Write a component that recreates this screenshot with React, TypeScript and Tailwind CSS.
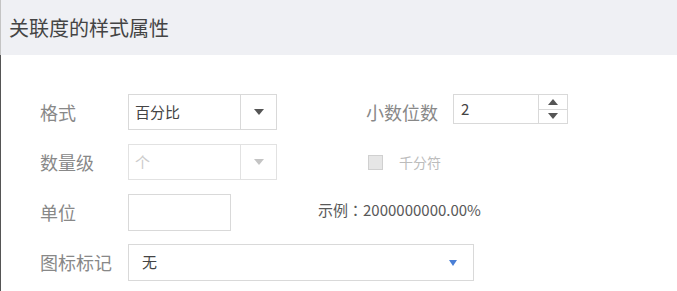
import React from "react";

const font = { fontFamily: '"Noto Sans CJK SC", "Noto Sans", sans-serif' };

function Tri({ dir = "down", color = "#555", w = 9, h = 5 }: { dir?: "up" | "down"; color?: string; w?: number; h?: number }) {
  return (
    <svg width={w} height={h} viewBox={`0 0 ${w} ${h}`}>
      {dir === "down" ? (
        <polygon points={`0,0 ${w},0 ${w / 2},${h}`} fill={color} />
      ) : (
        <polygon points={`0,${h} ${w},${h} ${w / 2},0`} fill={color} />
      )}
    </svg>
  );
}

export default function App() {
  return (
    <div className="w-[677px] h-[291px] overflow-hidden bg-white" style={font}>
      <div className="h-[55px] bg-[#eff0f4] border-l border-[#c4c4c4] flex items-center pl-[8px] text-[20px] text-[#444]">
        关联度的样式属性
      </div>
      <div className="h-[236px] border-l border-[#555] pl-[39px] pt-[39px] flex flex-col gap-[14px]">
        {/* Row 1 */}
        <div className="flex items-start h-[36px]">
          <div className="w-[88px] h-[36px] flex items-center text-[18px] text-[#888]">格式</div>
          <div className="w-[149px] h-[36px] border border-[#d9d9d9] flex">
            <div className="flex-1 flex items-center pl-[6px] text-[15px] text-[#444]">百分比</div>
            <div className="w-[36px] border-l border-[#d9d9d9] flex items-center justify-center">
              <Tri color="#555" w={10} h={6} />
            </div>
          </div>
          <div className="ml-[89px] w-[87px] h-[36px] flex items-center text-[18px] text-[#888]">小数位数</div>
          <div className="w-[115px] h-[30px] border border-[#d9d9d9] flex">
            <div className="flex-1 flex items-center pl-[7px] text-[15px] text-[#444]">2</div>
            <div className="w-[29px] border-l border-[#d9d9d9] flex flex-col">
              <div className="flex-1 flex items-center justify-center border-b border-[#d9d9d9]">
                <Tri dir="up" color="#555" w={10} h={6} />
              </div>
              <div className="flex-1 flex items-center justify-center">
                <Tri color="#555" w={10} h={6} />
              </div>
            </div>
          </div>
        </div>
        {/* Row 2 */}
        <div className="flex items-center h-[36px]">
          <div className="w-[88px] text-[18px] text-[#888]">数量级</div>
          <div className="w-[149px] h-[36px] border border-[#e2e2e2] flex">
            <div className="flex-1 flex items-center pl-[6px] text-[15px] text-[#cccccc]">个</div>
            <div className="w-[36px] border-l border-[#e2e2e2] flex items-center justify-center">
              <Tri color="#c4c4c4" w={10} h={6} />
            </div>
          </div>
          <div className="ml-[91px] w-[15px] h-[15px] border border-[#d0d0d0] bg-[#e6e6e6]" />
          <div className="ml-[16px] text-[14px] text-[#bcbcbc]">千分符</div>
        </div>
        {/* Row 3 */}
        <div className="flex items-center h-[36px]">
          <div className="w-[88px] text-[18px] text-[#888]">单位</div>
          <div className="w-[103px] h-[37px] border border-[#d9d9d9]" />
          <div className="ml-[87px] text-[15px] text-[#595959] -mt-[4px]">
            示例<span style={{ fontFamily: '"Noto Sans CJK TC", sans-serif' }}>：</span>2000000000.00%
          </div>
        </div>
        {/* Row 4 */}
        <div className="flex items-center h-[37px]">
          <div className="w-[88px] text-[18px] text-[#888]">图标标记</div>
          <div className="w-[346px] h-[37px] border border-[#d9d9d9] flex items-center pl-[13px] pr-[16px]">
            <div className="flex-1 text-[15px] text-[#444]">无</div>
            <Tri color="#4a7fd6" w={8} h={6} />
          </div>
        </div>
      </div>
    </div>
  );
}
